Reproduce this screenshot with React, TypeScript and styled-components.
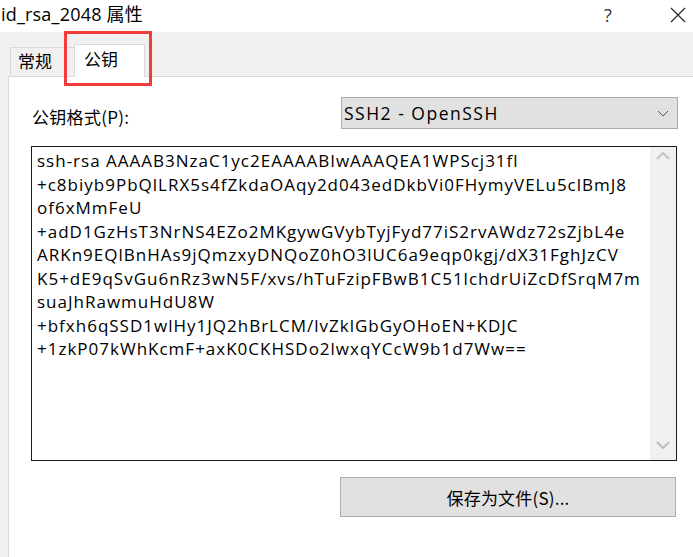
import React from 'react';
import styled, { createGlobalStyle } from 'styled-components';

const GlobalStyle = createGlobalStyle`
  html, body {
    margin: 0;
    padding: 0;
    background: #f0f0f0;
  }
  body {
    font-family: 'Open Sans', 'Noto Sans CJK SC', sans-serif;
    color: #000;
  }
`;

const keyLines = [
  'ssh-rsa AAAAB3NzaC1yc2EAAAABIwAAAQEA1WPScj31fl',
  '+c8biyb9PbQlLRX5s4fZkdaOAqy2d043edDkbVi0FHymyVELu5clBmJ8',
  'of6xMmFeU',
  '+adD1GzHsT3NrNS4EZo2MKgywGVybTyjFyd77iS2rvAWdz72sZjbL4e',
  'ARKn9EQlBnHAs9jQmzxyDNQoZ0hO3lUC6a9eqp0kgj/dX31FghJzCV',
  'K5+dE9qSvGu6nRz3wN5F/xvs/hTuFzipFBwB1C51lchdrUiZcDfSrqM7m',
  'suaJhRawmuHdU8W',
  '+bfxh6qSSD1wlHy1JQ2hBrLCM/lvZklGbGyOHoEN+KDJC',
  '+1zkP07kWhKcmF+axK0CKHSDo2lwxqYCcW9b1d7Ww==',
];

const Window = styled.div`
  width: 693px;
  height: 557px;
  overflow: hidden;
  background: #f0f0f0;
  display: flex;
  flex-direction: column;
  font-size: 16px;
`;

const TitleBar = styled.div`
  height: 32px;
  flex: none;
  background: #fff;
  display: flex;
  align-items: center;
  padding-left: 1px;
`;

const Title = styled.div`
  flex: 1;
  font-size: 18px;
  letter-spacing: 0.2px;
  line-height: 32px;
  margin-top: -4px;
`;

const Help = styled.div`
  width: 20px;
  font-size: 18px;
  color: #333;
  margin-right: 52px;
  text-align: center;
  margin-top: -2px;
`;

const Close = styled.div`
  width: 16px;
  height: 16px;
  margin-right: 7px;
  margin-top: -2px;
  display: flex;
`;

const TabStrip = styled.div`
  height: 44px;
  flex: none;
  display: flex;
  align-items: flex-end;
  padding-left: 10px;
  position: relative;
  z-index: 1;
`;

const Tab = styled.div<{ $active?: boolean }>`
  position: relative;
  box-sizing: border-box;
  height: ${(p) => (p.$active ? '33px' : '29px')};
  margin-bottom: ${(p) => (p.$active ? '-1px' : '0')};
  padding: ${(p) => (p.$active ? '3px 0 0 9px' : '2px 0 0 7px')};
  width: ${(p) => (p.$active ? '71px' : '64px')};
  background: ${(p) => (p.$active ? '#fff' : '#f0f0f0')};
  border: 1px solid #d9d9d9;
  border-bottom: none;
  border-right: ${(p) => (p.$active ? '1px solid #d9d9d9' : 'none')};
  font-family: 'Noto Sans CJK SC', sans-serif;
  font-size: 17px;
  line-height: 22px;
`;

const Highlight = styled.div`
  position: absolute;
  left: -11px;
  top: -14px;
  width: 88px;
  height: 55px;
  box-sizing: border-box;
  border: 3px solid #f23b3b;
  pointer-events: none;
`;

const Panel = styled.div`
  flex: 1;
  margin-left: 8px;
  background: #fff;
  border-top: 1px solid #d9d9d9;
  border-left: 1px solid #d9d9d9;
  padding: 20px 0 0 22px;
  display: flex;
  flex-direction: column;
`;

const FormatRow = styled.div`
  width: 647px;
  height: 32px;
  display: flex;
  align-items: center;
`;

const Label = styled.div`
  flex: 1;
  font-size: 17px;
  letter-spacing: 0.3px;
  padding-left: 1px;
  margin-top: 6px;
  font-family: 'Noto Sans CJK SC', sans-serif;
`;

const Select = styled.div`
  box-sizing: border-box;
  width: 337px;
  height: 32px;
  background: #e1e1e1;
  border: 1px solid #adadad;
  display: flex;
  align-items: center;
  padding: 0 8px 0 2px;
  font-size: 17.5px;
  letter-spacing: 1.5px;
`;

const SelectText = styled.span`
  flex: 1;
  margin-top: -1px;
`;

const KeyBox = styled.div`
  box-sizing: border-box;
  width: 646px;
  height: 315px;
  margin-top: 17px;
  border: 1px solid #1a1a1a;
  display: flex;
`;

const KeyText = styled.div`
  flex: 1;
  padding: 2px 0 0 5px;
  font-size: 17px;
  letter-spacing: 1px;
  line-height: 23.5px;
  white-space: pre;
  overflow: hidden;
`;

const ScrollTrack = styled.div`
  width: 26px;
  background: #f0f0f0;
  display: flex;
  flex-direction: column;
  justify-content: space-between;
  align-items: center;
  padding: 4px 0 10px;
`;

const ButtonRow = styled.div`
  width: 646px;
  display: flex;
  justify-content: flex-end;
  margin-top: 16px;
`;

const Button = styled.div`
  box-sizing: border-box;
  width: 336px;
  height: 40px;
  margin-right: 1px;
  background: #e1e1e1;
  border: 1px solid #adadad;
  display: flex;
  align-items: center;
  justify-content: center;
  font-family: 'Noto Sans CJK SC', sans-serif;
  font-size: 17px;
  letter-spacing: 0.2px;
`;

const Chevron = ({ up, color }: { up?: boolean; color: string }) => (
  <svg width="14" height="9" viewBox="0 0 14 9">
    <polyline
      points={up ? '1,8 7,2 13,8' : '1,1 7,7 13,1'}
      fill="none"
      stroke={color}
      strokeWidth="2.2"
    />
  </svg>
);

export default function App() {
  return (
    <Window>
      <GlobalStyle />
      <TitleBar>
        <Title>id_rsa_2048 属性</Title>
        <Help>?</Help>
        <Close>
          <svg width="16" height="16" viewBox="0 0 16 16">
            <path d="M1 1 L15 15 M15 1 L1 15" stroke="#222" strokeWidth="1.1" />
          </svg>
        </Close>
      </TitleBar>
      <TabStrip>
        <Tab>常规</Tab>
        <Tab $active>
          公钥
          <Highlight />
        </Tab>
      </TabStrip>
      <Panel>
        <FormatRow>
          <Label>公钥格式(P):</Label>
          <Select>
            <SelectText>SSH2 - OpenSSH</SelectText>
            <svg width="12" height="7" viewBox="0 0 12 7">
              <polyline points="1,1 6,6 11,1" fill="none" stroke="#555" strokeWidth="1" />
            </svg>
          </Select>
        </FormatRow>
        <KeyBox>
          <KeyText>{keyLines.join('\n')}</KeyText>
          <ScrollTrack>
            <Chevron up color="#c5c5c5" />
            <Chevron color="#c0c0c0" />
          </ScrollTrack>
        </KeyBox>
        <ButtonRow>
          <Button>保存为文件(S)...</Button>
        </ButtonRow>
      </Panel>
    </Window>
  );
}
